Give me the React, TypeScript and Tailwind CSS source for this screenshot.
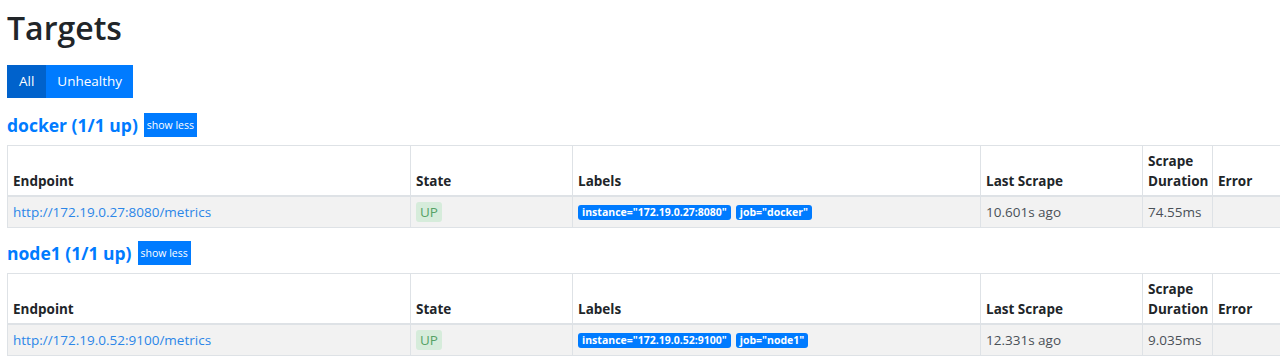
const groups = [
  {
    name: "docker",
    endpoint: "http://172.19.0.27:8080/metrics",
    labels: ['instance="172.19.0.27:8080"', 'job="docker"'],
    last: "10.601s ago",
    duration: "74.55ms",
  },
  {
    name: "node1",
    endpoint: "http://172.19.0.52:9100/metrics",
    labels: ['instance="172.19.0.52:9100"', 'job="node1"'],
    last: "12.331s ago",
    duration: "9.035ms",
  },
];

function TargetGroup({ g }: { g: (typeof groups)[number] }) {
  return (
    <div className="mb-[13px]">
      <div className="flex items-center gap-[6px] mb-[8px]">
        <a className="text-[17.5px] font-bold text-[#007bff] leading-[24px]">{g.name} (1/1 up)</a>
        <button className="bg-[#007bff] text-white text-[10.5px] leading-[24px] px-[3px] h-[24px]">show less</button>
      </div>
      <div className="overflow-hidden">
        <table className="table-fixed border-collapse w-[1340px] text-[13.5px] leading-[20px]">
          <colgroup>
            <col className="w-[403px]" />
            <col className="w-[162px]" />
            <col className="w-[408px]" />
            <col className="w-[162px]" />
            <col className="w-[70px]" />
            <col />
          </colgroup>
          <thead>
            <tr className="text-[#212529]">
              {["Endpoint", "State", "Labels", "Last Scrape", "Scrape Duration", "Error"].map((h) => (
                <th
                  key={h}
                  className="border border-[#dee2e6] border-b-2 px-[5px] pt-[5px] pb-[4px] text-left align-bottom font-bold"
                >
                  {h}
                </th>
              ))}
            </tr>
          </thead>
          <tbody>
            <tr className="bg-[#f2f2f2] text-[#495057]">
              <td className="border border-[#dee2e6] px-[5px] py-[5px]">
                <a className="text-[#2b86e8]">{g.endpoint}</a>
              </td>
              <td className="border border-[#dee2e6] px-[5px] py-[5px]">
                <span className="inline-block bg-[#d6ecdb] text-[#55a266] rounded-[3px] px-[4px] leading-[20px]">UP</span>
              </td>
              <td className="border border-[#dee2e6] px-[5px] py-[5px]">
                <div className="flex gap-[5px]">
                  {g.labels.map((l) => (
                    <span
                      key={l}
                      className="bg-[#007bff] text-white text-[10.5px] font-bold rounded-[3px] px-[4px] leading-[15px]"
                    >
                      {l}
                    </span>
                  ))}
                </div>
              </td>
              <td className="border border-[#dee2e6] px-[5px] py-[5px]">{g.last}</td>
              <td className="border border-[#dee2e6] px-[5px] py-[5px]">{g.duration}</td>
              <td className="border border-[#dee2e6] px-[5px] py-[5px]"></td>
            </tr>
          </tbody>
        </table>
      </div>
    </div>
  );
}

export default function App() {
  return (
    <div className="bg-white min-h-[358px] pl-[7px] font-['Open_Sans','Noto_Sans',sans-serif] text-[#212529]">
      <h2 className="text-[32px] font-semibold leading-[38px] pt-[9px] mb-[18px]">Targets</h2>
      <div className="flex mb-[15px]">
        <button className="bg-[#0062cc] text-white text-[13.5px] leading-[21px] px-[12px] py-[6px]">All</button>
        <button className="bg-[#007bff] text-white text-[13.5px] leading-[21px] px-[11px] py-[6px]">Unhealthy</button>
      </div>
      {groups.map((g) => (
        <TargetGroup key={g.name} g={g} />
      ))}
    </div>
  );
}
